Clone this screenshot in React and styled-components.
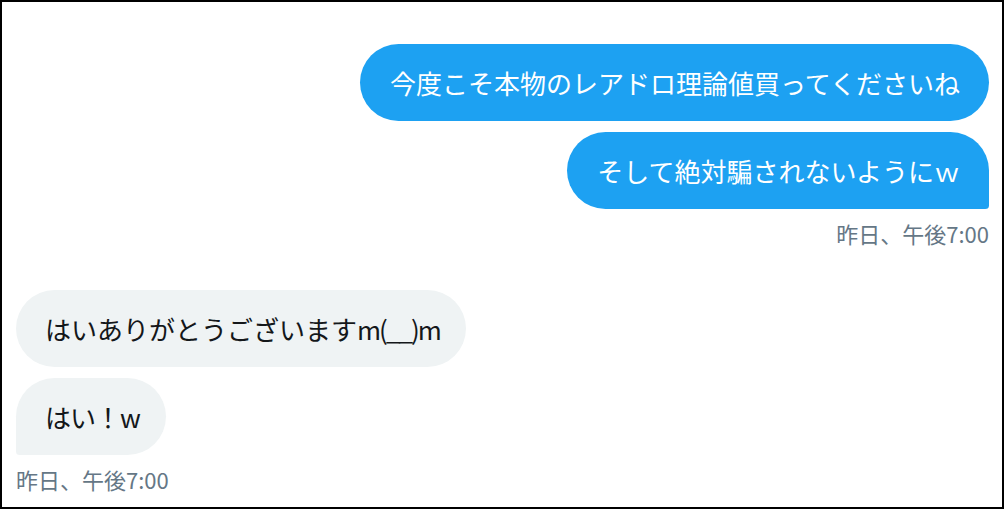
import React from "react";
import styled, { createGlobalStyle } from "styled-components";

const Global = createGlobalStyle`
  html, body {
    margin: 0;
    padding: 0;
    background: #ffffff;
  }
  * {
    box-sizing: border-box;
  }
`;

// вся рамка
const Frame = styled.div`
  width: 1004px;
  height: 509px;
  border: 2px solid #000000;
  background: #ffffff;
  padding: 42px 13px 0 14px;
  font-family: "Noto Sans CJK JP", "Noto Sans", sans-serif;
  display: flex;
  flex-direction: column;
`;

const Group = styled.div`
  display: flex;
  flex-direction: column;
  align-items: ${props => (props.mine ? "flex-end" : "flex-start")};
  gap: 11px;
  margin-bottom: ${props => (props.mine ? "42px" : "0")};
`;

const Bubble = styled.div`
  background: ${props => (props.mine ? "#1da1f2" : "#eff3f4")};
  color: ${props => (props.mine ? "#ffffff" : "#14171a")};
  font-size: 26px;
  line-height: 35px;
  height: 77px;
  padding: ${props => (props.mine ? "21px 29px 21px 30px" : "21px 26px 21px 29px")};
  border-radius: 40px;
  white-space: nowrap;
  ${props =>
    props.last && props.mine ? "border-bottom-right-radius: 4px;" : ""}
  ${props =>
    props.last && !props.mine ? "border-bottom-left-radius: 4px;" : ""}
`;

// латиница в сообщении поуже
const Latin = styled.span`
  letter-spacing: ${props => props.tight || "-2px"};
`;

const Time = styled.div`
  font-size: 22px;
  line-height: 29px;
  color: #657786;
  margin-top: -1px;
`;

export default function App() {
  return (
    <>
      <Global />
      <Frame>
        <Group mine>
          <Bubble mine>今度こそ本物のレアドロ理論値買ってくださいね</Bubble>
          <Bubble mine last>そして絶対騙されないようにｗ</Bubble>
          <Time>昨日、午後7:00</Time>
        </Group>
        <Group>
          <Bubble>
            はいありがとうございます<Latin>m(__)m</Latin>
          </Bubble>
          <Bubble last>
            <Latin tight="-1px">はい！w</Latin>
          </Bubble>
          <Time>昨日、午後7:00</Time>
        </Group>
      </Frame>
    </>
  );
}
